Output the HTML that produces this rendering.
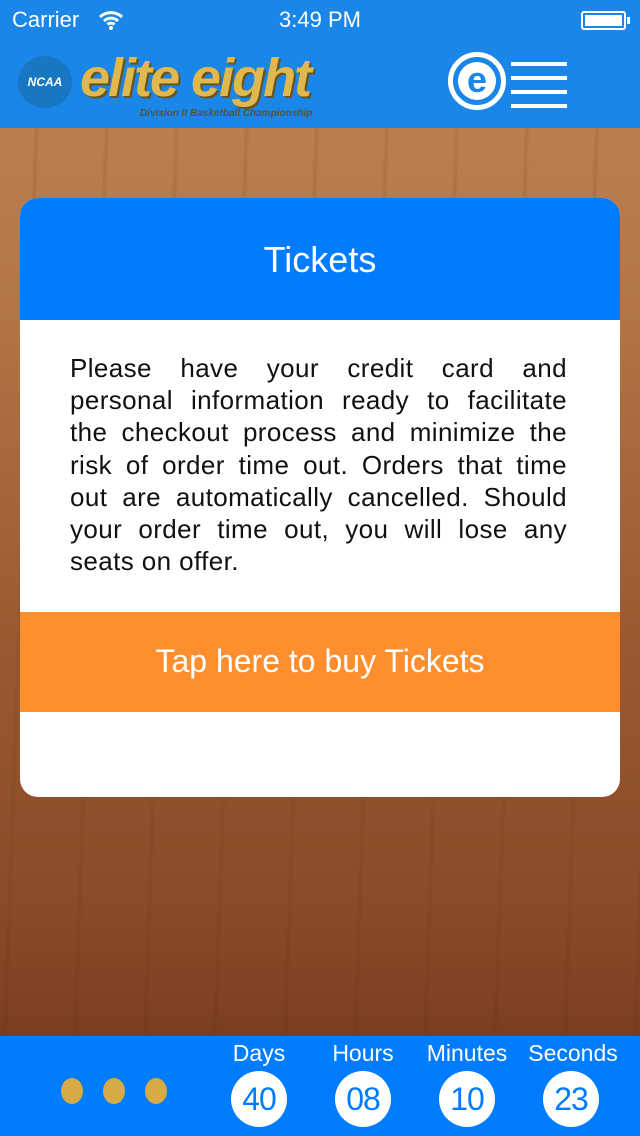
<!DOCTYPE html>
<html><head><meta charset="utf-8"><style>
*{margin:0;padding:0;box-sizing:border-box}
body{width:640px;height:1136px;overflow:hidden;position:relative;font-family:"Liberation Sans",sans-serif;
background:
repeating-linear-gradient(92deg,rgba(90,40,10,0) 0 38px,rgba(90,40,10,.1) 40px 42px,rgba(90,40,10,0) 44px 70px),
linear-gradient(#c08552 0%,#b57648 25%,#9c5a33 55%,#8a4a28 80%,#6e3519 100%);}
.hdr{position:absolute;left:0;top:0;width:640px;height:128px;background:#1a86e8;color:#fff}
.sb{position:absolute;top:7px;font-size:22px}
.card{position:absolute;left:20px;top:198px;width:600px;height:599px;background:#fff;border-radius:18px;overflow:hidden}
.ch{height:122px;background:#007cff;color:#fff;font-size:36px;text-align:center;line-height:124px}
.txt{position:absolute;left:50px;top:154px;width:497px;font-size:26px;letter-spacing:0.4px;line-height:32.2px;color:#111}
.txt div{text-align:justify;text-align-last:justify;white-space:nowrap}
.txt div.l{text-align-last:left}
.btn{position:absolute;left:0;top:414px;width:600px;height:100px;background:#ff8e2f;color:#fff;font-size:32px;text-align:center;line-height:98px}
.bot{position:absolute;left:0;top:1036px;width:640px;height:100px;background:#007cff;color:#fff}
.lab{position:absolute;top:4px;font-size:23px;width:110px;text-align:center}
.c{position:absolute;top:35px;width:56px;height:56px;border-radius:50%;background:#fff;color:#007cff;font-size:32px;text-align:center;line-height:57px;letter-spacing:-1px}
.d{position:absolute;top:42px;width:22px;height:26px;border-radius:50%;background:#d6aa45}
</style></head><body>
<div class="hdr">
<div class="sb" style="left:12px">Carrier</div>
<svg style="position:absolute;left:98px;top:10px" width="26" height="20" viewBox="0 0 26 20"><path d="M2 7a16 16 0 0 1 22 0M6 11a10 10 0 0 1 14 0M9.5 14.5a5 5 0 0 1 7 0" stroke="#fff" stroke-width="3" fill="none"/><circle cx="13" cy="18" r="2" fill="#fff"/></svg>
<div class="sb" style="left:0;width:640px;text-align:center">3:49 PM</div>
<div style="position:absolute;left:581px;top:11px;width:45px;height:19px;border:2px solid #fff;border-radius:3px;padding:2px"><div style="background:#fff;height:100%"></div></div>
<div style="position:absolute;left:627px;top:17px;width:3px;height:7px;background:#fff"></div>
<div style="position:absolute;left:18px;top:56px;width:54px;height:52px;border-radius:50%;background:#1877c3;color:#fff;font-size:12px;font-weight:bold;text-align:center;line-height:52px;font-style:italic">NCAA</div>
<div style="position:absolute;left:80px;top:48px;width:355px;height:62px;font-size:54px;font-weight:bold;font-style:italic;color:#e0b84d;line-height:60px;letter-spacing:-2px;text-shadow:2px 2px 0 #6a5420">elite eight</div>
<div style="position:absolute;left:140px;top:108px;width:180px;font-size:10px;font-weight:bold;font-style:italic;color:#553">Division II Basketball Championship</div>
<div style="position:absolute;left:448px;top:52px;width:58px;height:58px;border:5px solid #fff;border-radius:50%;"><div style="position:absolute;left:5px;top:5px;width:38px;height:38px;border-radius:50%;background:#fff;color:#1a86e8;font-size:36px;font-weight:bold;text-align:center;line-height:36px">e</div></div>
<div style="position:absolute;left:511px;top:62px;width:56px">
<div style="height:4px;background:#fff;margin-bottom:10px"></div><div style="height:4px;background:#fff;margin-bottom:10px"></div><div style="height:4px;background:#fff;margin-bottom:10px"></div><div style="height:4px;background:#fff"></div></div>
</div>
<div class="card">
<div class="ch">Tickets</div>
<div class="txt">
<div>Please have your credit card and</div>
<div>personal information ready to facilitate</div>
<div>the checkout process and minimize the</div>
<div>risk of order time out. Orders that time</div>
<div>out are automatically cancelled. Should</div>
<div>your order time out, you will lose any</div>
<div class="l">seats on offer.</div>
</div>
<div class="btn">Tap here to buy Tickets</div>
</div>
<div class="bot">
<div class="d" style="left:61px"></div><div class="d" style="left:103px"></div><div class="d" style="left:145px"></div>
<div class="lab" style="left:204px">Days</div><div class="lab" style="left:308px">Hours</div><div class="lab" style="left:412px">Minutes</div><div class="lab" style="left:518px">Seconds</div>
<div class="c" style="left:231px">40</div><div class="c" style="left:335px">08</div><div class="c" style="left:439px">10</div><div class="c" style="left:543px">23</div>
</div>
</body></html>
